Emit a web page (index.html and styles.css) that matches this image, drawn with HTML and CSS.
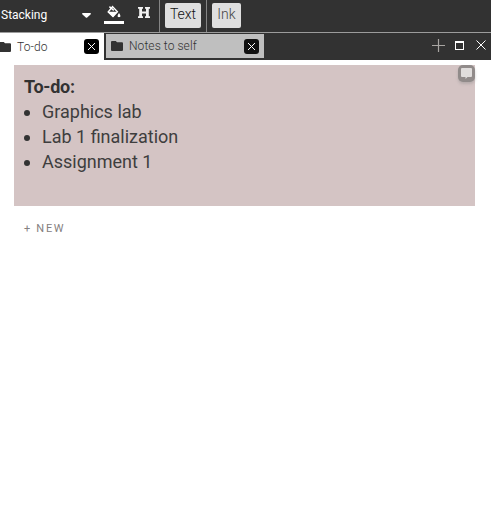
FILE: index.html
```html
<!DOCTYPE html>
<html lang="en">
<head>
<meta charset="utf-8">
<title>To-do</title>
<link rel="stylesheet" href="styles.css">
</head>
<body>
<header class="toolbar">
  <div class="select"><span>Stacking</span><svg width="9" height="5" viewBox="0 0 9 5"><path d="M1 0h7q1 0 1 1L5.2 4.6q-.7.5-1.4 0L0 1q0-1 1-1z" fill="#fff"/></svg></div>
  <div class="tools">
    <div class="fill"><svg width="14" height="15" viewBox="0 0 14 15"><path d="M2.4 1.6 6.8 5.4" stroke="#fff" stroke-width="1.4"/><path d="M5.6 1.6 10.4 6.8 6 11.6 1.2 7z" fill="none" stroke="#fff" stroke-width="1.4"/><path d="M1 6.8h9.6L6 12z" fill="#fff"/><path d="M12 8c2.2 3 1.5 4.2 0 4.2s-2.2-1.2 0-4.2z" fill="#fff"/></svg></div>
    <svg class="heading" width="12" height="11" viewBox="0 0 12 11"><path d="M0 0h5v1.7H4v2.8h4V1.7H7V0h5v1.7h-1.2v7.6H12V11H7V9.3h1V6.4H4v2.9h1V11H0V9.3h1.2V1.7H0z" fill="#f2f2f2"/></svg>
  </div>
  <div class="group"><button class="btn text">Text</button></div>
  <div class="group"><button class="btn ink">Ink</button></div>
</header>
<nav class="tabs">
  <div class="tab active">
    <svg class="folder" width="12" height="10" viewBox="0 0 12 10"><path d="M1 0h3.8L6 1.3h5q1 0 1 1V9q0 1-1 1H1q-1 0-1-1V1q0-1 1-1z"/></svg>
    <span>To-do</span>
    <svg class="close" width="15" height="15" viewBox="0 0 15 15"><rect width="15" height="15" rx="3"/><path d="M4 4l7 7M11 4l-7 7"/></svg>
  </div>
  <div class="tab other">
    <svg class="folder" width="12" height="10" viewBox="0 0 12 10"><path d="M1 0h3.8L6 1.3h5q1 0 1 1V9q0 1-1 1H1q-1 0-1-1V1q0-1 1-1z"/></svg>
    <span>Notes to self</span>
    <svg class="close" width="15" height="15" viewBox="0 0 15 15"><rect width="15" height="15" rx="3"/><path d="M4 4l7 7M11 4l-7 7"/></svg>
  </div>
  <div class="controls">
    <svg width="13" height="13" viewBox="0 0 13 13"><path d="M6.5 0v13M0 6.5h13" stroke="#a8a5a2" stroke-width="1.2"/></svg>
    <svg class="max" width="9" height="9" viewBox="0 0 9 9"><path d="M.5 0v9M8.5 0v9M0 8.5h9" stroke="#fff" stroke-width="1"/><path d="M0 1h9" stroke="#fff" stroke-width="2"/></svg>
    <svg class="x" width="10" height="10" viewBox="0 0 10 10"><path d="M.5.5l9 9M9.5.5l-9 9" stroke="#fff" stroke-width="1"/></svg>
  </div>
</nav>
<main>
  <section class="note">
    <h1>To-do:</h1>
    <ul><li>Graphics lab</li><li>Lab 1 finalization</li><li>Assignment 1</li></ul>
    <div class="comment"><svg width="11" height="11" viewBox="0 0 11 11"><path d="M1 0h9q1 0 1 1v7q0 1-1 1H6.5L4.5 11V9H1Q0 9 0 8V1q0-1 1-1z" fill="#e0dddc"/></svg></div>
  </section>
  <div class="new">+ NEW</div>
</main>
</body>
</html>
```

FILE: styles.css
```css
* { box-sizing: border-box; }
body { margin: 0; background: #fff; font-family: Roboto, sans-serif; color: #323232; overflow: hidden; }
svg { display: block; flex: none; }
.toolbar { display: flex; height: 33px; background: #323232; border-bottom: 1px solid #9c9c9c; }
.select { width: 104px; height: 30px; padding: 0 13px 0 1px; display: flex; align-items: center; justify-content: space-between; color: #fff; font-size: 12px; }
.tools { width: 55px; display: flex; align-items: flex-start; }
.fill { width: 20px; height: 24px; border-bottom: 3px solid #fff; padding: 5px 0 0 3px; }
.heading { margin: 7px 0 0 14px; }
.group { width: 47px; border-left: 1px solid #858585; padding: 3px 0 0 5px; }
.btn { display: block; height: 25px; padding: 0 0 3px; border: 0; border-radius: 2px; background: #dfdfdf; font: 300 14px Roboto, sans-serif; }
.text { width: 36px; color: #111; }
.ink { width: 29px; color: #444; }
.tabs { display: flex; height: 27px; background: #323232; }
.tab { display: flex; align-items: center; font-size: 12px; font-weight: 300; letter-spacing: .08px; }
.folder { fill: #323232; margin-right: 6px; }
.close { margin-left: auto; fill: #000; }
.close path { stroke: #fff; stroke-width: 1; }
.active { width: 104px; background: #fff; padding-right: 5px; }
.active .folder { margin-left: -1px; }
.other { width: 158px; height: 24px; margin: 1px 0 0 2px; padding: 0 5px; background: #bfbfbf; }
.other .close { fill: #111; margin-top: 1px; }
.controls { margin-left: auto; display: flex; align-items: center; padding: 0 5px 2px 0; }
.max { margin: -1px 0 0 10px; }
.x { margin: -1px 0 0 12px; }
.note { position: relative; margin: 5px 16px 0 14px; height: 141px; background: #d4c4c4; padding: 9px 10px; font-size: 18px; line-height: 25px; }
h1 { margin: 0; font-size: 18px; font-weight: 700; letter-spacing: -.25px; }
ul { margin: 0; padding-left: 18px; list-style: none; color: #3e3e3e; }
li { position: relative; }
li::before { content: ""; position: absolute; left: -18px; top: 11px; width: 6px; height: 6px; border-radius: 50%; background: #323232; }
.comment { position: absolute; right: 0; top: 0; width: 17px; height: 17px; padding: 3px; border-radius: 5px; background: #918b8a; box-shadow: 0 2px 3px #8886; }
.new { margin: 16px 0 0 24px; font-size: 11px; line-height: 13px; letter-spacing: 1.7px; color: #858080; }
```
